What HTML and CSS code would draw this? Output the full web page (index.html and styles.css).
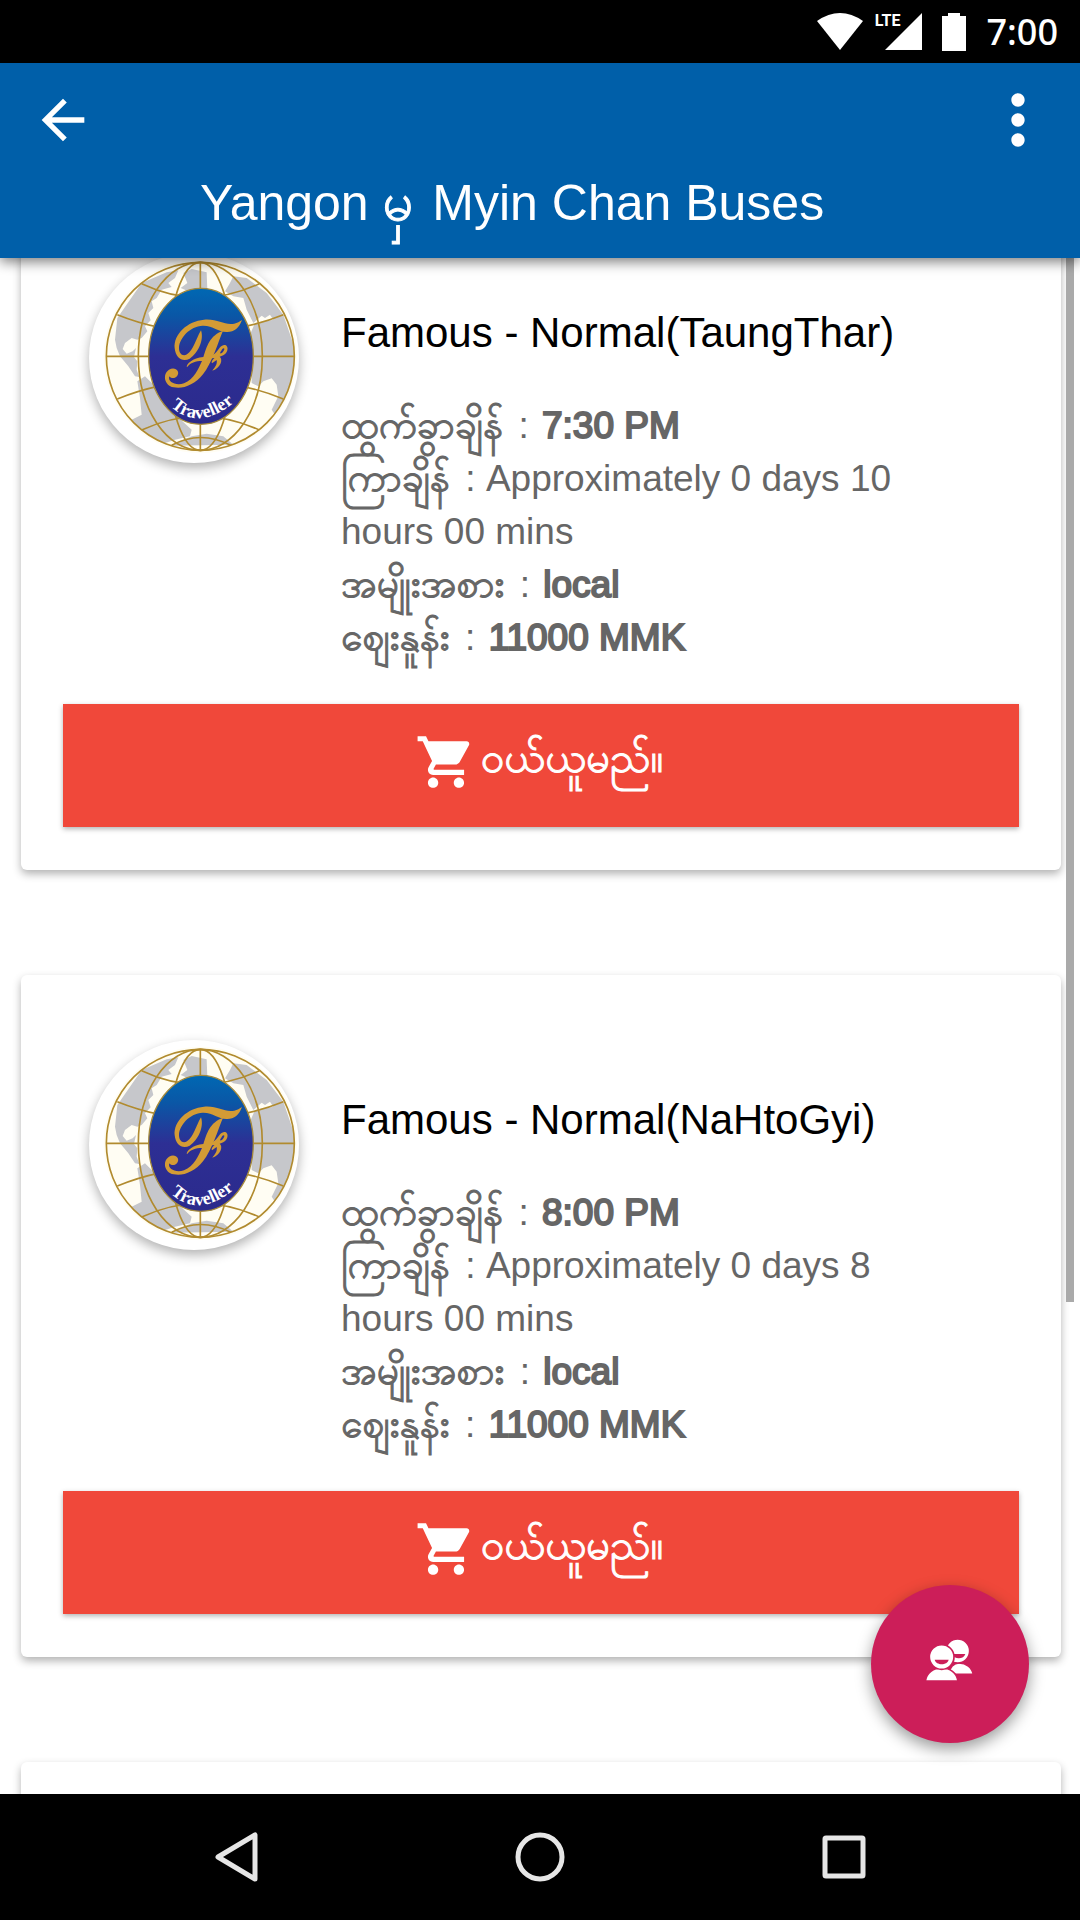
FILE: index.html
```html
<!DOCTYPE html>
<html lang="my">
<head>
  <meta charset="UTF-8">
  <meta name="viewport" content="width=device-width, initial-scale=1.0">
  <title>Yangon မှ Myin Chan Buses</title>
  <link rel="stylesheet" href="styles.css">
</head>
<body>
  <!-- shared logo -->
  <svg class="defs" width="0" height="0" aria-hidden="true">
    <defs>
      <linearGradient id="oval" x1="0" y1="0" x2="0" y2="1">
        <stop offset="0" stop-color="#0068b3"/>
        <stop offset="0.2" stop-color="#0a57a6"/>
        <stop offset="0.5" stop-color="#2d2f94"/>
        <stop offset="1" stop-color="#2b2a8c"/>
      </linearGradient>
      <clipPath id="globe"><circle cx="421" cy="400" r="282"/></clipPath>
      <path id="arc" d="M332 550Q421 634 540 522"/>
      <symbol id="logo" viewBox="87 90 630 630">
        <circle cx="421" cy="400" r="290" fill="#fffdf3"/>
        <g clip-path="url(#globe)" fill="#c6c7cb">
          <path d="M165 350L172 285L245 180L320 148L355 142L345 165L325 180L335 192L305 200L290 225L275 235L280 255L265 270L272 292L255 310L262 325L245 345L232 350L215 345L195 360L188 378L200 392L218 385L228 375L222 402L232 415L230 440L238 462L225 460L205 430L180 400L170 375Z"/>
          <path d="M370 150L395 138L440 148L442 200L420 215L385 205L362 195L382 180Z"/>
          <path d="M232 475L255 460L285 490L330 560L395 620L390 640L345 650L300 665L250 630L215 590L245 575L240 525Z"/>
          <path d="M495 205L510 180L520 160L560 165L620 210L670 275L706 380L706 430L680 520L645 575L635 560L655 520L650 485L635 466L610 475L595 490L575 480L572 330L585 300L640 290L630 275L615 285L605 278L580 300L560 260L550 225L520 220Z"/>
          <path d="M395 640L440 632L490 640L520 665L330 668Z"/>
        </g>
        <g fill="none" stroke="#b18b2f" stroke-width="5">
          <circle cx="421" cy="400" r="282"/>
          <ellipse cx="421" cy="400" rx="186" ry="282"/>
          <ellipse cx="421" cy="400" rx="96" ry="282"/>
          <path d="M421 118V682M139 400H703"/>
          <path d="M172 275Q421 375 670 275M245 182Q421 265 598 182"/>
          <path d="M172 528Q421 425 670 528M245 621Q421 540 598 621M335 667Q421 620 512 667"/>
        </g>
        <ellipse cx="423" cy="400" rx="157" ry="204" fill="url(#oval)" stroke="#a58a3c" stroke-width="4"/>
        <g fill="#d39b35">
          <path d="M546 291C537 316 522 328 499 327C474 327 459 307 428 308C389 310 359 345 357 373C356 393 369 402 381 394C402 379 406 351 423 322C433 351 414 391 389 407C368 419 347 405 344 376C340 333 383 294 432 290C469 287 488 303 512 303C528 303 536 298 546 291Z"/>
          <path d="M489 323C475 356 456 420 429 454C403 486 369 499 341 493C312 487 307 453 327 440C346 430 362 445 351 460C342 469 331 465 328 460C322 478 349 489 372 481C402 470 416 435 426 414C407 414 391 419 381 433C376 425 399 404 430 402C440 371 449 337 489 323Z"/>
          <path d="M446 400C461 399 470 386 479 374C491 360 506 366 502 382C499 393 489 399 479 401C490 409 482 435 457 443C463 434 473 425 470 411L456 421C452 415 463 404 472 400C463 408 452 408 446 400ZM484 383C480 388 478 393 484 391C491 387 496 376 491 376C488 376 486 380 484 383Z"/>
        </g>
        <text class="logo-word"><textPath href="#arc">Traveller</textPath></text>
      </symbol>
    </defs>
  </svg>

  <div class="status">
    <svg width="46" height="37" viewBox="0 0 46 37"><path d="M0 8Q23-8 46 8L23 37Z" fill="#fff"/></svg>
    <div class="network">
      <span class="lte">LTE</span>
      <svg width="37" height="37" viewBox="0 0 37 37"><path d="M37 0V37H0Z" fill="#fff"/></svg>
    </div>
    <svg width="24" height="38" viewBox="0 0 24 38"><path d="M6 0H18V3H24V38H0V3H6Z" fill="#fff"/></svg>
    <time class="clock">7:00</time>
  </div>

  <header class="toolbar">
    <div class="actions">
      <button type="button" class="icon-btn" aria-label="Back">
        <svg width="64" height="64" viewBox="0 0 24 24"><path d="M20 11H7.83l5.59-5.59L12 4l-8 8 8 8 1.41-1.41L7.83 13H20v-2z" fill="#fff"/></svg>
      </button>
      <button type="button" class="icon-btn" aria-label="More">
        <svg width="80" height="80" viewBox="0 0 24 24"><path d="M12 8c1.1 0 2-.9 2-2s-.9-2-2-2-2 .9-2 2 .9 2 2 2zm0 2c-1.1 0-2 .9-2 2s.9 2 2 2 2-.9 2-2-.9-2-2-2zm0 6c-1.1 0-2 .9-2 2s.9 2 2 2 2-.9 2-2-.9-2-2-2z" fill="#fff"/></svg>
      </button>
    </div>
    <h1 class="title">Yangon <span class="mm">မှ</span> Myin Chan Buses</h1>
  </header>

  <main class="list">
    <article class="card">
      <div class="bus">
        <svg class="logo" role="img" aria-label="Famous Traveller"><use href="#logo"/></svg>
        <div class="info">
          <h2 class="name">Famous - Normal(TaungThar)</h2>
          <p><span class="mm">ထွက်ခွာချိန်</span> : <b>7:30 PM</b></p>
          <p><span class="mm">ကြာချိန်</span> : Approximately 0 days 10 hours 00 mins</p>
          <p><span class="mm">အမျိုးအစား</span> : <b>local</b></p>
          <p><span class="mm">ဈေးနူန်း</span> : <b>11000 MMK</b></p>
        </div>
      </div>
      <button type="button" class="buy">
        <svg width="62" height="62" viewBox="0 0 24 24"><path d="M7 18c-1.1 0-1.99.9-1.99 2S5.9 22 7 22s2-.9 2-2-.9-2-2-2zM1 2v2h2l3.6 7.59-1.35 2.45c-.16.28-.25.61-.25.96 0 1.1.9 2 2 2h12v-2H7.42c-.14 0-.25-.11-.25-.25l.03-.12.9-1.63h7.45c.75 0 1.41-.41 1.75-1.03l3.58-6.49c.08-.14.12-.31.12-.48 0-.55-.45-1-1-1H5.21l-.94-2H1zm16 16c-1.1 0-1.99.9-1.99 2s.89 2 1.99 2 2-.9 2-2-.9-2-2-2z" fill="#fff"/></svg>
        <span>ဝယ်ယူမည်။</span>
      </button>
    </article>

    <article class="card">
      <div class="bus">
        <svg class="logo" role="img" aria-label="Famous Traveller"><use href="#logo"/></svg>
        <div class="info">
          <h2 class="name">Famous - Normal(NaHtoGyi)</h2>
          <p><span class="mm">ထွက်ခွာချိန်</span> : <b>8:00 PM</b></p>
          <p><span class="mm">ကြာချိန်</span> : Approximately 0 days 8 hours 00 mins</p>
          <p><span class="mm">အမျိုးအစား</span> : <b>local</b></p>
          <p><span class="mm">ဈေးနူန်း</span> : <b>11000 MMK</b></p>
        </div>
      </div>
      <button type="button" class="buy">
        <svg width="62" height="62" viewBox="0 0 24 24"><path d="M7 18c-1.1 0-1.99.9-1.99 2S5.9 22 7 22s2-.9 2-2-.9-2-2-2zM1 2v2h2l3.6 7.59-1.35 2.45c-.16.28-.25.61-.25.96 0 1.1.9 2 2 2h12v-2H7.42c-.14 0-.25-.11-.25-.25l.03-.12.9-1.63h7.45c.75 0 1.41-.41 1.75-1.03l3.58-6.49c.08-.14.12-.31.12-.48 0-.55-.45-1-1-1H5.21l-.94-2H1zm16 16c-1.1 0-1.99.9-1.99 2s.89 2 1.99 2 2-.9 2-2-.9-2-2-2z" fill="#fff"/></svg>
        <span>ဝယ်ယူမည်။</span>
      </button>
    </article>

    <article class="card"></article>

    <div class="scrollbar"></div>
    <button type="button" class="fab" aria-label="Passengers">
      <svg width="48" height="42" viewBox="0 0 144 126">
        <g fill="#fff" stroke="#cc1e59" stroke-width="5">
          <path d="M68 106C70 84 84 72 99 72C121 72 138 85 142 106Z"/>
          <circle cx="95" cy="36" r="36"/>
          <path d="M78 45H118C114 62 83 62 78 45Z" fill="#cc1e59" stroke="none"/>
          <path d="M-2 126C2 101 22 87 47 87C72 87 92 101 96 126Z"/>
          <circle cx="47" cy="54" r="37"/>
        </g>
        <path d="M26 62H68C64 80 30 80 26 62Z" fill="#cc1e59"/>
      </svg>
    </button>
  </main>

  <nav class="navbar">
    <button type="button" class="nav-btn" aria-label="Back">
      <svg width="50" height="50" viewBox="0 0 50 50"><path d="M44 3V47L7 25Z"/></svg>
    </button>
    <button type="button" class="nav-btn" aria-label="Home">
      <svg width="50" height="50" viewBox="0 0 50 50"><circle cx="25" cy="25" r="22"/></svg>
    </button>
    <button type="button" class="nav-btn" aria-label="Recent apps">
      <svg width="50" height="50" viewBox="0 0 50 50"><rect x="6" y="6" width="38" height="38" rx="1"/></svg>
    </button>
  </nav>
</body>
</html>
```

FILE: styles.css
```css
*,*:before,*:after{
  box-sizing: border-box;
  margin: 0;
  padding: 0;
}

html,body{
  height: 100%;
}
body{
  display: flex;
  flex-direction: column;
  overflow: hidden;
  background: #fff;
  font-family: "Liberation Sans", Arial, Padauk, "Noto Sans Myanmar", sans-serif;
}
button{
  border: 0;
  background: none;
  font-family: inherit;
  cursor: pointer;
}
svg{
  display: block;
}
.defs{
  position: absolute;
}

/* status bar */
.status{
  flex: none;
  display: flex;
  align-items: center;
  justify-content: flex-end;
  gap: 20px;
  height: 63px;
  padding-right: 22px;
  background: #000;
  color: #fff;
}
.network{
  position: relative;
  padding-left: 2px;
}
.lte{
  position: absolute;
  right: 22px;
  top: 0;
  font: bold 16px/16px Roboto, sans-serif;
}
.clock{
  font: 500 36px/40px "Noto Sans", sans-serif;
}

/* toolbar */
.toolbar{
  flex: none;
  position: relative;
  z-index: 2;
  height: 195px;
  background: #005fa9;
  color: #fff;
  box-shadow: 0 4px 12px rgba(0,0,0,0.5);
}
.actions{
  display: flex;
  align-items: center;
  justify-content: space-between;
  height: 114px;
  padding: 0 22px 0 31px;
}
.title{
  padding: 0 200px;
  font-size: 50px;
  line-height: 52px;
  font-weight: normal;
  white-space: nowrap;
}

/* burmese text sits a bit larger and heavier than the latin */
.mm{
  margin-right: 5px;
  font-size: 39px;
  line-height: 0;
  -webkit-text-stroke: 1px;
}
.title .mm{
  font-size: 54px;
}

/* bus list, scrolled part of the way down */
.list{
  flex: 1;
  position: relative;
  min-height: 0;
  overflow: hidden;
}
.card{
  min-height: 682px;
  margin: 0 19px 105px 21px;
  padding: 65px 42px 43px;
  border-radius: 6px;
  background: #fff;
  box-shadow: 0 4px 9px rgba(0,0,0,0.3);
}
.card:first-child{
  margin-top: -70px;
}
.bus{
  display: flex;
  gap: 42px;
  padding-left: 26px;
  margin-bottom: 40px;
}
.logo{
  flex: none;
  width: 210px;
  height: 210px;
  border-radius: 50%;
  background: #fff;
  box-shadow: 0 5px 12px rgba(0,0,0,0.3);
}
.logo-word{
  fill: #fff;
  font: bold 54px "Liberation Serif", serif;
}
.info{
  flex: 1;
  padding: 55px 80px 0 0;
  color: #666;
  font-size: 37px;
  line-height: 53px;
}
.info b{
  margin-left: 3px;
  font-weight: normal;
  -webkit-text-stroke: 2px;
}
.name{
  margin-bottom: 41px;
  color: #000;
  font-size: 42px;
  line-height: 50px;
  font-weight: normal;
}
.buy{
  display: flex;
  align-items: center;
  justify-content: center;
  gap: 4px;
  width: 100%;
  height: 123px;
  padding: 0 4px 8px 0;
  background: #f0483a;
  color: #fff;
  font-size: 42px;
  -webkit-text-stroke: 1px;
  box-shadow: 0 2px 5px rgba(0,0,0,0.3);
}
.scrollbar{
  position: absolute;
  right: 6px;
  top: 0;
  width: 8px;
  height: 68%;
  background: #aaa;
}
.fab{
  position: absolute;
  right: 51px;
  bottom: 51px;
  display: flex;
  align-items: center;
  justify-content: center;
  width: 158px;
  height: 158px;
  padding-bottom: 8px;
  border-radius: 50%;
  background: #cc1e59;
  box-shadow: 0 6px 16px rgba(0,0,0,0.4);
}

/* system navigation */
.navbar{
  flex: none;
  position: relative;
  display: grid;
  grid-template-columns: repeat(3, 1fr);
  height: 126px;
  padding: 0 84px;
  background: #000;
}
.nav-btn{
  display: flex;
  align-items: center;
  justify-content: center;
}
.nav-btn svg{
  fill: none;
  stroke: #e6e6e6;
  stroke-width: 5;
  stroke-linejoin: round;
}
```
